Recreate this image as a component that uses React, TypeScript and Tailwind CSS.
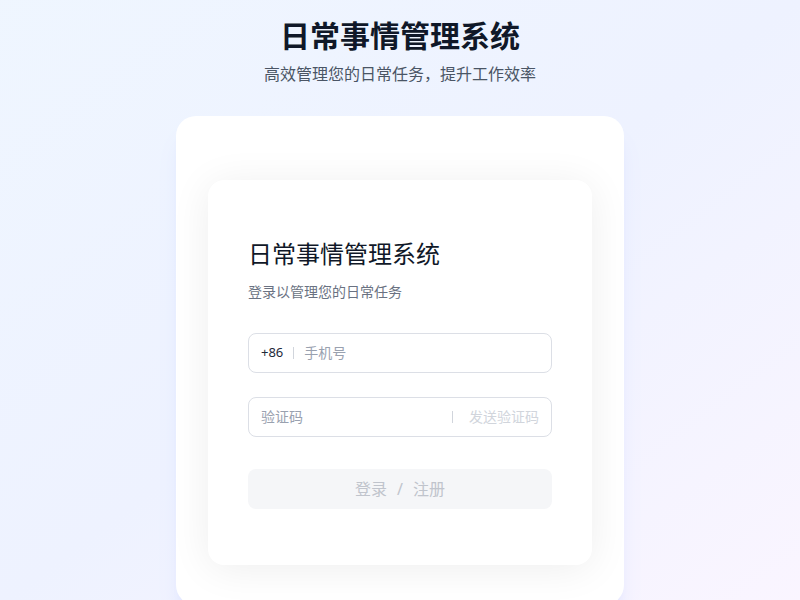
import React from "react";

export default function App() {
  const font = { fontFamily: '"Noto Sans", "Noto Sans CJK SC", sans-serif' };
  return (
    <div
      className="min-h-screen w-full bg-gradient-to-br from-blue-50 via-indigo-50 to-purple-50 flex flex-col items-center overflow-hidden"
      style={font}
    >
      <div className="pt-[18px] flex flex-col items-center">
        <h1 className="text-3xl font-bold text-gray-900 leading-9">日常事情管理系统</h1>
        <p className="mt-2 text-base text-gray-600 leading-6">高效管理您的日常任务，提升工作效率</p>
      </div>
      <div className="mt-[30px] w-[448px] bg-white rounded-[20px] shadow-xl shadow-indigo-200/40 pt-16 px-8 pb-10">
        <div className="bg-white rounded-2xl shadow-[0_4px_40px_rgba(0,0,0,0.07)] pt-[58px] px-10 pb-14">
          <h2 className="text-2xl leading-8 text-gray-900 font-normal">日常事情管理系统</h2>
          <p className="mt-3 text-sm leading-5 text-gray-500">登录以管理您的日常任务</p>

          <div className="mt-[31px] h-10 rounded-lg border border-[#dcdfe6] flex items-center px-3">
            <span className="text-[13px] text-gray-800">+86</span>
            <span className="mx-[10px] w-px h-3 bg-gray-300"></span>
            <span className="text-sm text-gray-400">手机号</span>
          </div>

          <div className="mt-6 h-10 rounded-lg border border-[#dcdfe6] flex items-center px-3">
            <span className="text-sm text-gray-400 flex-1">验证码</span>
            <span className="w-px h-3 bg-gray-300 mr-4"></span>
            <span className="text-sm text-gray-300">发送验证码</span>
          </div>

          <div className="mt-8 h-10 rounded-lg bg-[#f5f6f8] flex items-center justify-center gap-[10px] text-base text-[#c0c4cc]">
            <span>登录</span>
            <span>/</span>
            <span>注册</span>
          </div>
        </div>
      </div>
    </div>
  );
}
